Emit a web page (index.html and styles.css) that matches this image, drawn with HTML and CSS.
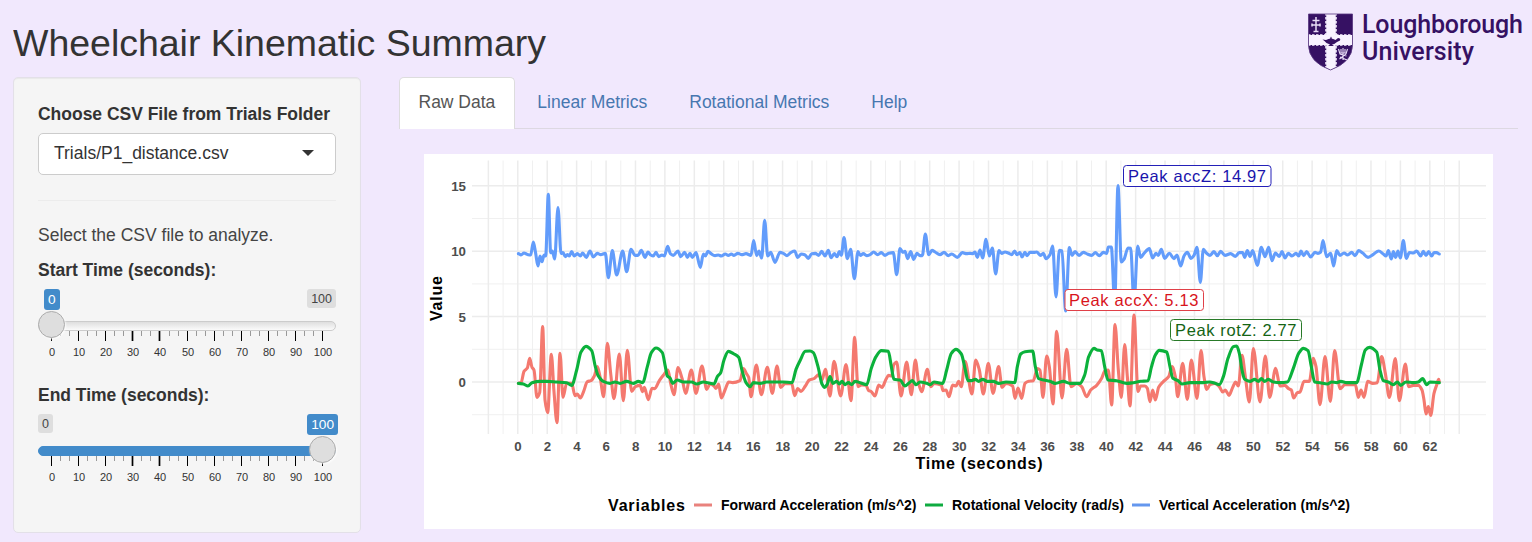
FILE: index.html
```html
<!DOCTYPE html>
<html lang="en">
<head>
<meta charset="utf-8">
<title>Wheelchair Kinematic Summary</title>
<link rel="stylesheet" href="styles.css">
</head>
<body>
<header class="header">
  <h2 class="title"><svg class="title-svg" width="540" height="54"><text x="0" y="43" textLength="533">Wheelchair Kinematic Summary</text></svg></h2>
  <svg class="logo" width="218" height="62" viewBox="1306 11 218 62">
    <defs><clipPath id="shield"><path d="M1308.5 14H1352.5V45Q1352.500 62 1330.500 70Q1308.500 62 1308.500 45Z"/></clipPath></defs>
    <g clip-path="url(#shield)">
      <rect x="1308" y="13" width="45" height="58" fill="#361163"/>
      <path d="M1331 12V72" stroke="#f8f2ff" stroke-width="9.500"/>
      <path d="M1307 40H1354" stroke="#f8f2ff" stroke-width="10"/>
      <path d="M1326 13V35M1336 13V35M1326 46V71M1336 46V71M1308 35H1326M1336 35H1353M1308 45H1326M1336 45H1353" stroke="#f8f2ff" stroke-width="1.600" stroke-dasharray="2.500 1.500" fill="none"/>
    </g>
    <path d="M1308.5 14H1352.5V45Q1352.500 62 1330.500 70Q1308.500 62 1308.500 45Z" fill="none" stroke="#55337d" stroke-width=".8"/>
    <path d="M1316 17V32M1312.500 20.500H1319.500M1311.500 25H1320.500M1313.500 31.500H1318.500M1312 23.500V26.500M1320 23.500V26.500" stroke="#e8dcf6" stroke-width="1.500" fill="none"/>
    <path d="M1322.500 39.500L1326 40Q1331 37 1335.500 40L1338 38Q1341 38 1340 40.500L1337 42Q1334 44.500 1332 44.500L1334 46H1328L1330 44.500Q1326 43.500 1324.500 41ZM1330 38.500L1331 36.500L1332 38.500Z" fill="#361163"/>
    <path d="M1343 48V60M1338.500 49L1340 54L1346.500 56M1347.500 49L1346 54L1339.500 59M1341 49V53H1345V49M1340 57L1347 60" stroke="#e8dcf6" stroke-width="1.100" fill="none"/>
    <g class="logo-text"><text x="1362" y="33.200" textLength="161">Loughborough</text><text x="1362" y="60" textLength="112">University</text></g>
  </svg>
</header>
<main class="main">
  <section class="well">
    <label class="label">Choose CSV File from Trials Folder</label>
    <div class="select"><span>Trials/P1_distance.csv</span><i class="caret"></i></div>
    <hr class="rule">
    <p class="help">Select the CSV file to analyze.</p>
    <div class="slider">
      <label class="label">Start Time (seconds):</label>
      <div class="chips"><b class="chip chip-on chip-start">0</b><span class="chip">100</span></div>
      <div class="track"><i class="handle"></i></div>
      <svg class="scale" width="298" height="30"></svg>
    </div>
    <div class="slider">
      <label class="label">End Time (seconds):</label>
      <div class="chips"><span class="chip">0</span><b class="chip chip-on chip-end">100</b></div>
      <div class="track track-full"><i class="handle handle-end"></i></div>
      <svg class="scale" width="298" height="30"></svg>
    </div>
  </section>
  <section class="content">
    <nav class="tabs">
      <a class="tab tab-active">Raw Data</a><a class="tab">Linear Metrics</a><a class="tab">Rotational Metrics</a><a class="tab">Help</a>
    </nav>
    <svg class="chart" width="1069" height="375" viewBox="424 154 1069 375">
      <g id="grid"></g>
      <g class="traces"><path id="red" stroke="#f4796f"/><path id="green" stroke="#0bb13b"/><path id="blue" stroke="#629cfb"/></g>
      <g class="peak">
        <rect x="1123.500" y="165.500" width="147.500" height="21" rx="3" stroke="#2420b8"/><text x="1128" y="182" textLength="138" fill="#1a14ac">Peak accZ: 14.97</text>
        <rect x="1065" y="289.500" width="138.500" height="21" rx="3" stroke="#e04048"/><text x="1069" y="305.500" textLength="129.500" fill="#d8141c">Peak accX: 5.13</text>
        <rect x="1170.500" y="319.500" width="131" height="21" rx="3" stroke="#287a28"/><text x="1175" y="336" textLength="121.500" fill="#156415">Peak rotZ: 2.77</text>
      </g>
      <g class="axis-title">
        <text x="915.500" y="469" textLength="127">Time (seconds)</text>
        <text transform="translate(442 321) rotate(-90)" textLength="45">Value</text>
        <text x="608" y="510.500" textLength="77">Variables</text>
      </g>
      <path d="M694 505H712" class="key" stroke="#e9827d"/><path d="M925 505H943" class="key" stroke="#0fab40"/><path d="M1132 505H1150" class="key" stroke="#6497ee"/>
      <g class="key-text">
        <text x="721" y="510" textLength="195.500">Forward Acceleration (m/s^2)</text>
        <text x="952" y="510" textLength="172">Rotational Velocity (rad/s)</text>
        <text x="1159" y="510" textLength="191">Vertical Acceleration (m/s^2)</text>
      </g>
    </svg>
  </section>
</main>
<script src="chart.js"></script>
</body>
</html>
```
FILE: styles.css
```css
* { box-sizing: border-box; }
body {
  margin: 0;
  height: 542px;
  overflow: hidden;
  background: #f1e8fd;
  color: #333;
  font: 17.5px/25px "Liberation Sans", Arial, sans-serif;
}
.header { display: flex; justify-content: space-between; height: 77px; padding: 11px 8px 0 13px; }
.title { margin: 2px 0 0; font-size: 37.5px; font-weight: 400; }
.title-svg { display: block; fill: #333; }
.logo { display: block; }
.logo-text { font: 500 25px Roboto, sans-serif; fill: #361163; }
.main { display: flex; gap: 38px; padding-left: 13px; }
.well {
  width: 348px;
  height: 456px;
  padding: 24px 24px 0;
  background: #f5f5f5;
  border: 1px solid #e3e0e8;
  border-radius: 5px;
  box-shadow: inset 0 1px 1px rgba(0, 0, 0, .05);
}
.label { display: block; font-weight: 700; white-space: nowrap; letter-spacing: -.02px; }
.select {
  display: flex;
  align-items: center;
  justify-content: space-between;
  height: 42px;
  margin-top: 6px;
  padding: 0 21px 2px 15px;
  background: #fff;
  border: 1px solid #ccc;
  border-radius: 5px;
}
.caret { border: 6px solid transparent; border-top-color: #333; border-bottom: 0; }
.rule { margin: 25px 0 22px; border: 0; border-top: 1px solid #ececec; }
.help { margin: 0 0 10px; color: #444; }
.slider { height: 125px; }
.chips { display: flex; justify-content: space-between; height: 39px; padding-top: 6px; }
.chip {
  height: 19px;
  padding: 0 4px;
  background: #dedede;
  border-radius: 3px;
  color: #444;
  font-size: 12.5px;
  line-height: 20px;
}
.chip-on { height: 21px; background: #428bca; color: #fff; font-size: 13.7px; font-weight: 400; line-height: 21px; }
.chip-start { margin-left: 6px; }
.chip-end { margin-right: -2px; }
.track {
  position: relative;
  height: 10px;
  margin-top: -1px;
  background: linear-gradient(#dfdfdf, #fbfbfb);
  border: 1px solid #ccc;
  border-radius: 5px;
}
.track-full { background: #428bca; border-color: #428bca; }
.handle {
  position: absolute;
  top: -11px;
  left: -1px;
  z-index: 1;
  width: 27px;
  height: 27px;
  background: #dedede;
  border: 1px solid #ababab;
  border-radius: 50%;
  box-shadow: 1px 1px 2px rgba(255, 255, 255, .8);
}
.handle-end { left: auto; right: -1px; }
.scale { display: block; font-size: 11px; fill: #333; }
.content { width: 1119px; }
.tabs { display: flex; gap: 3px; height: 52px; border-bottom: 1px solid #ddd8e2; }
.tab { height: 52px; padding: 12px 18.5px; border: 1px solid transparent; color: #4777b0; line-height: 24px; white-space: nowrap; }
.tab-active { background: #fff; border-color: #ddd; border-bottom: 0; border-radius: 5px 5px 0 0; color: #555; }
.chart { display: block; margin: 25px 0 0 25px; background: #fff; }
.traces { fill: none; stroke-width: 3.1; stroke-linejoin: round; stroke-linecap: round; }
.peak rect { fill: #fff; stroke-width: 1; }
.peak text { font-size: 16.5px; }
.axis-title { font-size: 16px; font-weight: 700; fill: #000; }
.key { stroke-width: 3; }
.key-text { font-size: 14px; font-weight: 700; fill: #000; }
.tick-text { font-size: 13.3px; font-weight: 700; fill: #4d4d4d; }
.grid-line { stroke: #ececec; stroke-width: 1.5; }
.grid-minor { stroke: #f0f0f0; stroke-width: 1; }
```
FILE: chart.js
```js
// Each trace is stored in four consecutive windows at three units per pixel.
const origins = [[510, 170], [740, 170], [970, 170], [1200, 150]];

const data = {
  blue: [
    "25,251 33,255 42,249 51,253 62,255 70,216 77,250 84,288 90,258 96,275 102,255 107,258 115,73 122,248 127,243 134,267 144,113 153,250 159,248 166,260 172,254 178,258 185,245 193,258 202,251 211,258 218,249 229,262 240,243 250,261 262,250 272,254 286,250 295,323 307,242 320,315 338,243 350,305 363,238 375,256 384,256 394,241 405,262 414,246 422,255 430,258 438,247 446,260 456,255 463,258 473,229 481,251 490,256 504,243 512,260 524,247 532,262 540,250 547,262 558,248 571,292 580,252 586,258 594,244 602,250 615,257 625,255 634,258 646,252 655,256 664,252 672,256 684,250 695,254 708,251",
    "33,256 41,212 50,257 57,243 65,264 74,151 83,258 92,247 105,277 120,247 130,250 141,257 152,248 164,243 173,262 184,252 194,254 205,265 215,251 226,250 236,256 245,244 255,258 265,241 273,263 283,251 291,260 298,245 304,256 312,203 322,266 332,238 343,326 354,245 361,256 370,251 380,257 390,254 401,246 413,254 424,248 435,256 446,250 460,248 470,314 480,236 489,247 495,244 503,266 512,245 521,268 531,250 540,257 547,257 556,192 566,254 576,241 585,246 600,254 612,247 625,257 635,252 652,262 667,248 680,251",
    "0,250 8,251 15,246 22,262 30,240 38,264 48,208 58,258 67,234 77,312 87,242 95,250 105,246 115,249 125,254 134,243 141,254 150,248 156,261 165,247 171,257 180,247 192,247 200,246 212,256 220,250 228,266 240,254 248,228 258,381 268,241 276,243 287,423 298,233 306,256 315,245 327,256 340,247 352,252 365,256 376,248 388,257 400,247 410,250 415,231 424,231 434,400 444,47 454,276 462,268 474,234 482,235 492,400 503,228 512,262 522,250 538,236 548,264 558,250 565,256 574,238 584,265 598,250 612,266 621,255 632,288 642,258 652,247 663,265 672,256 681,232",
    "1,397 10,298 20,310 30,316 42,305 52,317 62,304 75,316 92,311 106,319 118,308 128,308 134,322 142,302 150,319 158,302 172,346 184,292 195,320 206,292 216,332 226,309 238,319 246,305 255,324 265,310 276,318 288,310 296,318 303,303 311,317 320,305 332,321 345,307 354,310 362,306 369,272 380,320 392,310 401,348 410,302 420,316 432,309 443,315 455,307 465,317 476,302 488,309 504,322 520,313 536,303 550,312 558,318 565,302 574,327 580,305 587,322 594,303 601,324 610,272 619,325 628,308 640,309 650,303 662,318 670,304 678,316 686,305 695,318 702,308 710,308 718,312"
  ],
  red: [
    "25,640 34,636 42,604 52,594 59,565 66,592 72,600 81,682 89,668 98,470 105,690 113,728 124,553 132,665 141,758 150,550 159,682 170,640 185,640 195,677 202,672 211,684 221,664 232,635 243,632 253,618 262,590 270,620 281,680 292,520 302,610 312,686 328,552 340,692 352,541 365,664 376,650 390,646 398,665 403,652 415,689 426,655 434,656 448,632 460,616 474,600 482,640 492,674 504,593 516,625 527,670 544,600 558,670 576,588 590,658 600,642 612,648 618,655 626,642 634,684 645,660 656,636 668,638 690,632 700,596 710,612",
    "26,622 33,680 49,585 64,674 82,592 97,670 111,588 122,652 135,641 155,640 164,677 173,656 183,664 196,648 208,630 222,626 236,614 246,630 256,598 270,678 282,574 302,678 318,584 333,692 344,502 354,650 365,645 378,646 386,662 393,664 405,678 416,645 426,652 438,628 446,616 455,618 461,585 470,576 483,678 500,576 514,674 526,570 536,640 545,665 562,598 573,650 582,640 604,645 609,662 618,660 627,680 638,645 648,648 656,634 664,650 675,574",
    "6,672 17,570 28,600 40,672 55,580 69,670 86,590 96,652 108,640 128,648 135,685 144,654 155,685 165,640 176,634 190,632 202,596 210,600 219,682 230,558 238,590 249,702 260,484 276,684 290,538 303,650 320,640 335,650 350,680 362,660 380,646 395,625 405,602 415,600 425,705 435,464 445,600 454,682 464,524 472,620 480,708 492,435 504,664 512,648 525,648 532,655 540,695 548,660 556,690 566,652 580,635 596,620 606,590 616,620 623,680 638,580 652,688 664,570 681,685",
    "3,602 12,680 20,718 30,704 45,700 58,710 68,726 76,720 87,736 98,712 107,696 115,708 126,616 136,680 148,756 160,596 180,756 196,618 209,742 227,655 240,708 254,706 266,716 274,720 281,744 292,728 300,726 312,694 328,694 340,625 348,650 360,764 375,620 391,754 404,602 420,716 435,704 466,704 475,742 483,720 492,742 503,694 518,700 532,698 545,620 556,670 568,742 586,626 598,752 616,642 626,710 640,706 655,706 666,720 672,750 678,792 685,770 692,796 702,730 710,705 716,688 718,694"
  ],
  green: [
    "25,640 40,642 54,648 66,638 90,634 110,634 140,636 170,638 185,646 200,600 213,546 228,529 245,542 256,590 264,616 280,634 300,640 315,636 330,640 350,634 370,640 385,634 398,638 412,590 424,548 438,534 457,548 466,590 472,618 480,624 488,640 502,630 520,636 545,636 560,642 580,636 600,640 612,642 622,620 632,608 642,570 655,544 672,552 686,562 697,605 708,638",
    "30,650 40,638 60,640 80,636 105,636 130,636 156,638 168,598 180,572 196,544 210,543 220,548 234,590 246,642 254,652 262,642 270,620 279,640 290,634 298,642 306,634 315,644 325,638 335,644 345,634 360,638 380,644 394,595 408,560 424,542 445,544 454,590 462,628 480,630 495,648 506,640 517,632 528,644 540,636 560,640 570,644 582,636 608,640 620,600 634,550 648,538 664,552 676,600 684,632",
    "4,632 16,628 26,634 38,628 52,634 70,634 86,640 108,636 134,638 142,590 152,552 165,545 188,543 196,590 206,626 222,630 240,634 256,640 280,634 300,640 330,640 344,615 356,560 372,535 382,540 394,542 404,590 414,630 440,632 470,640 490,638 512,634 534,632 544,592 556,555 568,541 590,546 600,590 608,624 624,632 636,642 660,638 688,638",
    "8,698 30,696 45,700 58,704 70,680 84,625 100,590 110,588 118,610 126,660 134,688 150,694 164,688 175,694 184,686 194,694 205,688 220,696 240,698 262,696 280,655 296,610 310,595 324,602 334,650 344,696 360,698 382,702 395,696 410,698 422,694 440,698 470,698 484,645 496,600 508,592 530,606 540,660 550,692 565,696 580,704 592,696 602,706 618,696 640,698 655,696 668,686 680,704 690,696 718,698"
  ]
};

// Monotone cubic: extremes keep a flat tangent so that peaks do not overshoot.
function smooth(p) {
  const slope = (a, b) => (b[1] - a[1]) / (b[0] - a[0]);
  const m = p.map((q, i) => {
    if (!i || i === p.length - 1) return 0;
    const a = slope(p[i - 1], q), b = slope(q, p[i + 1]);
    return a * b <= 0 ? 0 : 2 * a * b / (a + b);
  });
  let d = `M${p[0]}`;
  for (let i = 1; i < p.length; i++) {
    const h = (p[i][0] - p[i - 1][0]) / 3;
    d += `C${p[i - 1][0] + h} ${p[i - 1][1] + m[i - 1] * h} ${p[i][0] - h} ${p[i][1] - m[i] * h} ${p[i][0]} ${p[i][1]}`;
  }
  return d;
}

for (const [name, parts] of Object.entries(data)) {
  const points = parts.flatMap((part, k) => part.split(" ").map(pair => {
    const [x, y] = pair.split(",").map(Number);
    return [origins[k][0] + x / 3, origins[k][1] + y / 3];
  }));
  document.getElementById(name).setAttribute("d", smooth(points));
}

let grid = "";
for (let v = -2.5; v <= 15; v += 2.5) {
  const y = 382 - v * 13.08;
  const major = v % 5 === 0;
  grid += `<path class="${major ? "grid-line" : "grid-minor"}" d="M472 ${y}H1486"/>`;
  if (major) grid += `<text class="tick-text" x="466" y="${y + 5}" text-anchor="end">${v}</text>`;
}
for (let t = -2; t <= 64; t++) {
  const x = 517.8 + t * 14.71;
  grid += `<path class="${t % 2 ? "grid-minor" : "grid-line"}" d="M${x} 160.500V434"/>`;
  if (t % 2 === 0 && t >= 0 && t <= 62) grid += `<text class="tick-text" x="${x + .2}" y="451" text-anchor="middle">${t}</text>`;
}
document.getElementById("grid").innerHTML = grid;

for (const scale of document.querySelectorAll(".scale")) {
  let s = "";
  for (let i = 0; i <= 30; i++) {
    const x = Math.round(13 + i * 9.04) + .5;
    const major = i % 3 === 0;
    const w = i === 9 || i === 12 ? 1.7 : 1;
    s += `<path d="M${x} 0V${major ? 10 : 5}" stroke="${major ? "#000" : "#999"}" stroke-width="${w}"/>`;
    if (major) s += `<text x="${x + .5}" y="25" text-anchor="middle">${i / 3 * 10}</text>`;
  }
  scale.innerHTML = s;
}
```
